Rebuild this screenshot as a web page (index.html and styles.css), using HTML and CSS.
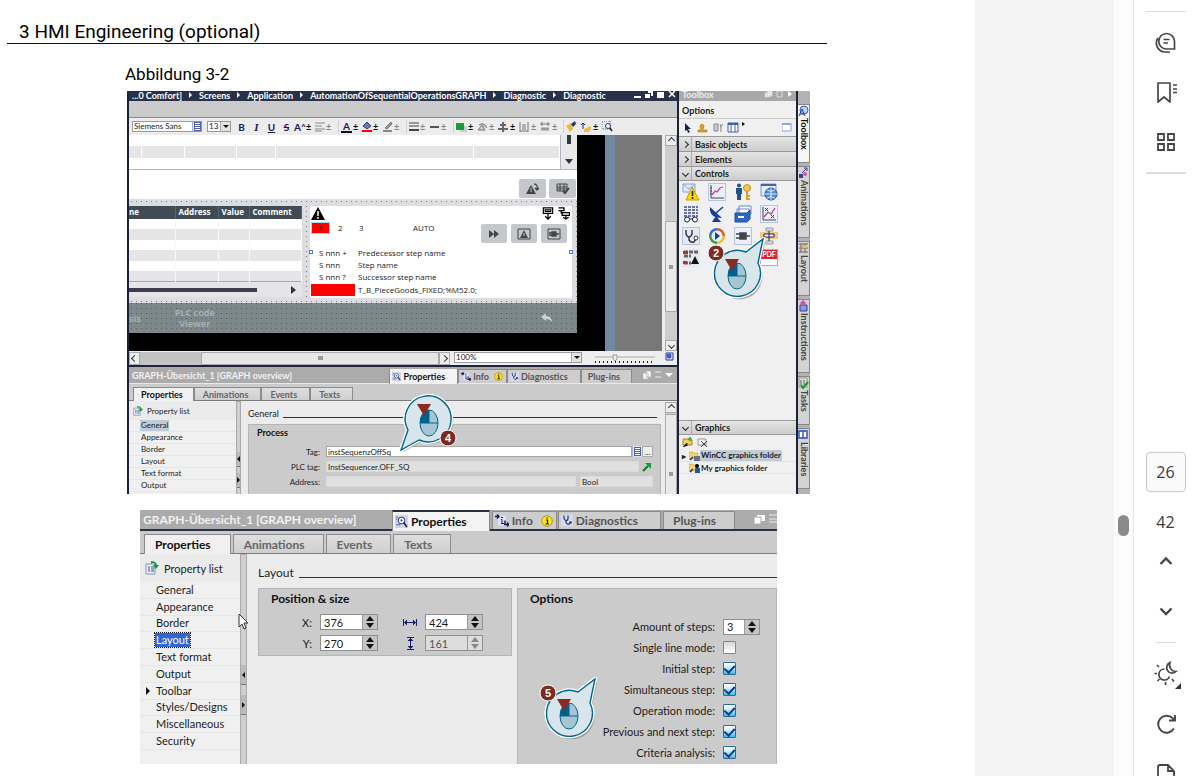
FILE: index.html
```html
<!DOCTYPE html>
<html lang="en">
<head>
<meta charset="utf-8">
<title>HMI Engineering</title>
<link rel="stylesheet" href="styles.css">
</head>
<body>
<svg class="sprite" aria-hidden="true">
  <symbol id="mouse" viewBox="0 0 20 28">
    <ellipse cx="10" cy="14" rx="9" ry="13" fill="#a5c5d3" stroke="#00668d" stroke-width="1"/>
    <path d="M10 1A9 13 0 0 0 1 14H10Z" fill="#005f8b"/>
    <path d="M10 1V14M1 14H19" stroke="#00668d" fill="none"/>
  </symbol>
  <symbol id="bubble-up" viewBox="0 0 68 68">
    <path d="M43 15L60 2L55 26A23 23 0 1 1 43 15Z" transform="translate(2 3)" fill="#777" opacity=".6"/>
    <path d="M43 15L60 2L55 26A23 23 0 1 1 43 15Z" fill="#d8e6ec" stroke="#fff" stroke-width="4"/>
    <path d="M43 15L60 2L55 26A23 23 0 1 1 43 15Z" fill="#d8e6ec" stroke="#00668d" stroke-width="1.4"/>
    <use href="#mouse" x="24" y="25" width="20" height="28"/>
    <path d="M22 22H36L29 34Z" fill="#8b2a20"/>
    <circle cx="13" cy="16" r="8" fill="#7d2a22" stroke="#fff" stroke-width="1"/>
  </symbol>
  <symbol id="bubble-down" viewBox="0 0 68 68">
    <path d="M24 56L6 66L13 46A23 23 0 1 1 24 56Z" transform="translate(2 2)" fill="#777" opacity=".6"/>
    <path d="M24 56L6 66L13 46A23 23 0 1 1 24 56Z" fill="#d8e6ec" stroke="#fff" stroke-width="4"/>
    <path d="M24 56L6 66L13 46A23 23 0 1 1 24 56Z" fill="#d8e6ec" stroke="#00668d" stroke-width="1.4"/>
    <use href="#mouse" x="24" y="25" width="20" height="28"/>
    <path d="M22 20H36L29 32Z" fill="#8b2a20"/>
    <circle cx="53" cy="54" r="8" fill="#7d2a22" stroke="#fff" stroke-width="1"/>
  </symbol>
  <symbol id="i-look" viewBox="0 0 12 12"><rect width="12" height="12" fill="#cdd6ee"/><circle cx="6" cy="5" r="3" fill="#fff" stroke="#3a4a8a"/><circle cx="6" cy="5" r="1" fill="#3a4a8a"/><path d="M8 7L11 11" stroke="#223" stroke-width="1.5"/><path d="M1 2H3M1 4H2M1 9H5" stroke="#5568a8"/></symbol>
  <symbol id="i-infodoc" viewBox="0 0 14 12"><rect x="3" y="1" width="8" height="10" fill="#dde2f4"/><path d="M0 2H4M2 0L4 2L2 4M9 10H14M12 8L14 10L12 12M10 6V10" stroke="#1b1d6b" stroke-width="1.5" fill="none"/><path d="M6 5H7V9M6 9H9M6 3H8" stroke="#1b1d6b" fill="none"/></symbol>
  <symbol id="i-warninfo" viewBox="0 0 12 12"><circle cx="6" cy="6" r="5.3" fill="#ffe21a" stroke="#b09a20"/><path d="M5 5H6.500V9M4.500 9H8M5.500 3H7" stroke="#222" stroke-width="1.2" fill="none"/></symbol>
  <symbol id="i-steth" viewBox="0 0 12 12"><rect width="12" height="12" fill="#d3dbef"/><path d="M3 1V4Q4 6 5 6Q7 6 7 4V1M5 6V8Q6 10 8 10L9 8" stroke="#2b3470" fill="none" stroke-width="1.2"/><circle cx="9.500" cy="8" r="1.300" fill="#2b3470"/></symbol>
  <symbol id="i-proplist" viewBox="0 0 14 14"><path d="M1 3H10V13H1Z" fill="#eef1fa" stroke="#8090c0"/><path d="M3 6H5M6 6H9M3 8H5M6 8H9M3 10H5M6 10H9" stroke="#3a4a8a"/><path d="M6 3Q9 0 10 4H8L11 8L14 4H12Q11 0 6 0Z" fill="#189a30"/></symbol>
  <symbol id="i-tri-warn" viewBox="0 0 14 14"><path d="M7 0L14 13H0Z"/><path d="M7 4V9M7 10V12" stroke="#fff" stroke-width="1.500"/></symbol>
  <symbol id="i-wins" viewBox="0 0 12 10"><path d="M3 1H11V7H3Z" fill="#fff"/><path d="M0 3H7V10H0Z" fill="#fff" stroke="#aaa"/></symbol>
  <symbol id="i-step" viewBox="0 0 12 14"><path d="M1 1H11V7H1ZM3 3H9V5H3ZM6 7V12M3 10L6 13L9 10" stroke="#000" stroke-width="1.300" fill="none"/></symbol>
  <symbol id="i-flow" viewBox="0 0 12 14"><path d="M0 1H6V4H0M3 4V7M4 6H12V9H4ZM8 9V12M5 11L8 13L11 11" stroke="#000" stroke-width="1.400" fill="none"/></symbol>
</svg>

<main class="doc">
  <h1 class="doc-head">3 HMI Engineering (optional)</h1>
  <p class="caption">Abbildung 3-2</p>

  <section class="shot editor" aria-label="Screen editor">
    <div class="main">
      <nav class="crumbs">
        <span>...0 Comfort]</span><i></i><span>Screens</span><i></i><span>Application</span><i></i><span>AutomationOfSequentialOperationsGRAPH</span><i></i><span>Diagnostic</span><i></i><span>Diagnostic</span>
        <svg class="win" width="44" height="8"><path d="M1 5H8V7H1ZM15 0H20V5H18V2H15ZM12 3H17V7H12ZM24 1H31V7H24Z" fill="#fff"/><path d="M36 0L42 6M42 0L36 6" stroke="#fff" stroke-width="1.500"/></svg>
      </nav>
      <div class="band"></div>
      <div class="toolbar">
        <label class="pick"><select class="face" aria-label="Font"><option>Siemens Sans</option></select><b class="lst"></b></label>
        <label class="pick size"><select aria-label="Size"><option>13</option></select><b class="dd"></b></label>
        <button class="tx">B</button><button class="tx it">I</button><button class="tx un">U</button><button class="tx st">S</button>
        <button class="tool"><strong>A˄</strong><em>±</em></button>
        <button class="tool dim"><svg width="10" height="10"><path d="M0 1H10M0 4H7M0 7H10M0 9H7" stroke="#888"/></svg><em>±</em></button>
        <hr>
        <button class="tool"><strong class="bar">A</strong><em>±</em></button>
        <button class="tool"><svg width="10" height="11"><path d="M1 5L5 1L9 5L5 8Z" fill="#6b79b0" stroke="#34427e"/><path d="M0 10H10" stroke="red" stroke-width="2"/></svg><em>±</em></button>
        <button class="tool dim"><svg width="10" height="11"><path d="M2 7L8 1L9 3L4 8Z" fill="#999" stroke="#777"/><path d="M0 10H9" stroke="#888" stroke-width="2"/></svg><em>±</em></button>
        <hr>
        <button class="tool dim"><svg width="10" height="10"><path d="M0 1H10M0 4H10" stroke="#444"/><path d="M0 8H10" stroke="#444" stroke-width="2"/></svg><em>±</em></button>
        <button class="tool dim"><svg width="10" height="10"><path d="M0 5H9" stroke="#555" stroke-width="2"/></svg><em>±</em></button>
        <hr>
        <button class="tool"><svg width="11" height="10"><path d="M4 4H11V10H4Z" fill="#ccc"/><path d="M0 1H8V8H0Z" fill="#16a035"/></svg><em>±</em></button>
        <button class="tool dim"><svg width="11" height="10"><path d="M1 8H8L5 3ZM2 3Q5 0 8 3L10 6" stroke="#777" fill="#ccc"/></svg><em>±</em></button>
        <button class="tool"><svg width="11" height="10"><path d="M5 0V10M2 3H8M0 7H10" stroke="#666" stroke-width="2"/></svg><em>±</em></button>
        <button class="tool dim"><svg width="11" height="10"><path d="M1 0V10M9 0V10M4 2V8M6 2V8M1 9H9" stroke="#777" fill="none"/></svg><em>±</em></button>
        <button class="tool dim"><svg width="11" height="10"><path d="M0 2H10M2 0V4M8 0V4" stroke="#777" fill="none"/><path d="M1 7H9" stroke="#999" stroke-width="3"/></svg><em>±</em></button>
        <hr>
        <button class="tool tight"><svg width="11" height="11"><path d="M0 5L5 2L7 8L4 11Z" fill="#f1b93c"/><path d="M5 3L9 0L10 3L7 6Z" fill="#26357c"/></svg></button>
        <button class="tool"><svg width="11" height="10"><path d="M2 7V1M0 3L2 1L4 3" stroke="#1b2d88" fill="none"/><path d="M3 7L10 4V7L8 10H3Z" fill="#f0b94a"/></svg><em>±</em></button>
        <button class="tool"><svg width="11" height="11"><path d="M0 0H8V8H0Z" fill="#eee" stroke="#4a5691" stroke-dasharray="1 1"/><circle cx="6" cy="5" r="2.500" fill="#fff" stroke="#26357c"/><path d="M8 7L10 10" stroke="#222" stroke-width="1.500"/></svg></button>
      </div>

      <div class="canvas">
        <div class="screen">
          <div class="upper">
            <table class="strip"><tr><td><td><td><td><td><td></tr><tr><td><td><td><td><td><td></tr><tr><td><td><td><td><td><td></tr></table>
            <div class="upscroll"><i></i><b></b></div>
          </div>
          <div class="acts">
            <button class="hmi"><svg width="14" height="12"><path d="M5 2L10 11H0Z" fill="#444"/><path d="M5 5V9" stroke="#ccc"/><path d="M8 1Q12 1 11 6M9 5L11 7L13 5" stroke="#444" fill="none" stroke-width="1.300"/></svg></button>
            <button class="hmi"><svg width="14" height="12"><path d="M1 1H11V8H1ZM1 4H11M4 1V8M8 1V8M1 6H11" stroke="#444" fill="none"/><path d="M7 8L9 10L13 5" stroke="#444" stroke-width="2" fill="none"/></svg></button>
          </div>
          <div class="grid-area">
            <div class="alarms">
              <table class="tags">
                <tr><th>ne</th><th>Address</th><th>Value</th><th>Comment</th></tr>
                <tr><td><td><td><td></tr><tr><td><td><td><td></tr><tr><td><td><td><td></tr><tr><td><td><td><td></tr><tr><td><td><td><td></tr><tr><td><td><td><td></tr>
              </table>
              <div class="hbar"><i></i><b></b></div>
            </div>
            <div class="graph">
              <div class="g-top"><svg width="14" height="14"><use href="#i-tri-warn"/></svg><span></span><svg width="12" height="13"><use href="#i-step"/></svg><svg width="12" height="13"><use href="#i-flow"/></svg></div>
              <div class="g-mode"><mark>1</mark><span>2</span><span>3</span><span class="auto">AUTO</span>
                <button class="hmi"><svg width="12" height="10"><path d="M1 1L6 5L1 9ZM6 1L11 5L6 9Z" fill="#444"/></svg></button>
                <button class="hmi"><svg width="14" height="12"><path d="M1 1H13V11H1Z" fill="none" stroke="#444"/><path d="M7 2L11 10H3Z" fill="#444"/><path d="M7 5V8" stroke="#ccc"/></svg></button>
                <button class="hmi"><svg width="14" height="12"><path d="M1 1H13V11H1Z" fill="none" stroke="#444"/><path d="M5 4H9V8H5ZM2 5H5M2 7H5M9 6H12" fill="#444" stroke="#444" stroke-width="1.300"/></svg></button>
              </div>
              <dl class="steps">
                <dt>S nnn +</dt><dd>Predecessor step name</dd>
                <dt>S nnn</dt><dd>Step name</dd>
                <dt>S nnn ?</dt><dd>Successor step name</dd>
                <dt class="red"></dt><dd>T_B_PieceGoods_FIXED;%M52.0;</dd>
              </dl>
              <i class="handle l"></i><i class="handle r"></i>
            </div>
          </div>
          <div class="footer"><span>sis</span><span class="plc">PLC code<br>Viewer</span><svg width="12" height="10"><path d="M0 4L5 0V3Q11 3 11 9Q9 6 5 6V8Z" fill="#ccd0d2"/></svg></div>
        </div>
        <div class="blue"></div><div class="gray"></div>
        <div class="vscroll"><button class="up" aria-label="Up"></button><i></i><button class="down" aria-label="Down"></button></div>
      </div>

      <div class="hscroll">
        <button class="arr left" aria-label="Left"></button><i></i><b></b><button class="arr right" aria-label="Right"></button>
        <label class="pick zoomsel"><select aria-label="Zoom"><option>100%</option></select><b class="dd"></b></label>
        <svg width="62" height="11"><path d="M1 4H61" stroke="#aaa"/><path d="M1 9H61" stroke="#222" stroke-width="2" stroke-dasharray="1 3"/><path d="M19 2H23V6L21 8L19 6Z" fill="#eee" stroke="#999"/></svg>
        <svg width="9" height="9"><path d="M1 1H8V8H1Z" fill="#dfe6ff" stroke="#223a9a"/><circle cx="4" cy="4" r="2.500" fill="#3658e0"/></svg>
      </div>

      <div class="insp small">
        <div class="titlebar">
          <span class="ttl">GRAPH-Übersicht_1 [GRAPH overview]</span>
          <button class="tt on"><svg width="9" height="9"><use href="#i-look"/></svg>Properties</button>
          <button class="tt"><svg width="10" height="9"><use href="#i-infodoc"/></svg>Info<svg class="wi" width="9" height="9"><use href="#i-warninfo"/></svg></button>
          <button class="tt"><svg width="9" height="9"><use href="#i-steth"/></svg>Diagnostics</button>
          <button class="tt last">Plug-ins</button>
          <svg class="wctl" width="34" height="9"><path d="M3 0H8V6H3ZM0 2H5V8H0Z" fill="#fff" stroke="#bbb"/><path d="M12 1H18M12 6H18" stroke="#eee"/><path d="M22 2H30L26 6Z" fill="#fff"/></svg>
        </div>
        <div class="subtabs"><button class="on">Properties</button><button>Animations</button><button>Events</button><button>Texts</button></div>
        <div class="ibody">
          <nav class="plist">
            <div class="phead"><svg width="10" height="10"><use href="#i-proplist"/></svg>Property list</div>
            <ul><li><a class="cur" href="#general">General</a></li><li><a href="#appearance">Appearance</a></li><li><a href="#border">Border</a></li><li><a href="#layout">Layout</a></li><li><a href="#text">Text format</a></li><li><a href="#output">Output</a></li><li><a href="#toolbar">Toolbar</a></li></ul>
          </nav>
          <div class="split"><i></i><b></b></div>
          <div class="pane">
            <h2>General</h2>
            <div class="group">
              <h3>Process</h3>
              <div class="field"><label for="tag">Tag:</label><input id="tag" value="instSequenzOffSq"><button class="lst" aria-label="Browse tags"></button><button class="dots">...</button></div>
              <div class="field"><label for="plc">PLC tag:</label><input id="plc" class="ro" readonly value="InstSequencer.OFF_SQ"><svg width="12" height="10"><path d="M2 9L7 4" stroke="#0d7a26" stroke-width="2"/><path d="M4 1H10V7Z" fill="#159c36"/></svg></div>
              <div class="field"><label for="adr">Address:</label><input id="adr" class="ro" readonly><input class="ro type" readonly value="Bool" aria-label="Data type"></div>
            </div>
          </div>
          <div class="vscroll low"><button class="up" aria-label="Up"></button><i></i></div>
        </div>
      </div>
    </div>

    <aside class="toolbox">
      <div class="tb-title"><span>Toolbox</span><svg width="30" height="8"><path d="M3 0H8V5H3ZM1 2H6V6H1Z" fill="#fff" stroke="#ccc"/><path d="M13 0H18V6H13Z" fill="none" stroke="#ddd"/><path d="M24 0L28 3L24 6Z" fill="#fff"/></svg></div>
      <div class="tb-opt">Options</div>
      <div class="tb-tools">
        <svg width="62" height="12"><path d="M2 1L8 7L5 7L7 10L5 11L4 8L2 9Z" fill="#14205e"/><path d="M15 10H24V8H21L20 6A2 2 0 1 0 18 6L17 8H15Z" fill="#d6a52b" stroke="#8d6b15" stroke-width=".500"/><path d="M31 2H35V9H31ZM37 2L38 5V10M40 2L38 5" stroke="#888" fill="#ccc"/><path d="M45 1H55V10H45ZM48 1V10M52 1V10" fill="#fff" stroke="#3d5ea8"/><path d="M45 2H55" stroke="#3d5ea8" stroke-width="2"/><path d="M59 0L62 2L59 4Z"/></svg>
        <svg width="10" height="9"><path d="M0 0H9V8H0Z" fill="#fff" stroke="#8da4dd"/><path d="M0 1H9" stroke="#8da4dd" stroke-width="2"/></svg>
      </div>
      <button class="acc"><i></i>Basic objects</button>
      <button class="acc"><i></i>Elements</button>
      <button class="acc open"><i></i>Controls</button>
      <div class="ctl">
        <svg viewBox="0 0 18 18"><path d="M1 1H13V9H1Z" fill="#dfe9ff" stroke="#86a3e0"/><path d="M1 1L7 6L13 1" stroke="#86a3e0" fill="none"/><path d="M10 4L17 17H4Z" fill="#ffd900" stroke="#c79f00"/><path d="M10.500 8V13M10.500 14V16" stroke="#222" stroke-width="1.500"/></svg>
        <svg viewBox="0 0 18 18"><rect x=".5" y=".5" width="17" height="17" fill="#eaf0fc" stroke="#b4c2e4"/><path d="M3 2V15H16M2 5H4M2 8H4M2 11H4" stroke="#444" fill="none"/><path d="M4 12L7 8L9 9L12 5L15 4" stroke="#d33a8c" fill="none" stroke-width="1.300"/></svg>
        <svg viewBox="0 0 18 18"><circle cx="5" cy="2.500" r="2" fill="#20508e"/><path d="M2 5H8V11H7V17H3V11H2Z" fill="#20508e"/><circle cx="13" cy="5" r="3.500" fill="#f3c54c" stroke="#c28b1c"/><path d="M13 8V17M13 13H16M13 16H16" stroke="#d9a32c" stroke-width="2"/></svg>
        <svg viewBox="0 0 18 18"><path d="M1 1H16V13H1Z" fill="#e6eefc" stroke="#7d97cf"/><path d="M1 2H16" stroke="#3d64b4" stroke-width="2"/><circle cx="11" cy="11" r="6" fill="#4a8bd0" stroke="#1f4f90"/><path d="M5 11H17M11 5V17M7 7Q11 10 15 7M7 15Q11 12 15 15" stroke="#dceaff" fill="none"/></svg>
        <svg viewBox="0 0 18 18"><rect width="18" height="18" fill="#eaf0fc"/><path d="M2 2H16M2 5H16M2 8H16M2 11H16" stroke="#3d4a86" stroke-dasharray="3 1" stroke-width="1.500"/><circle cx="5" cy="14.500" r="2.500" fill="#fff" stroke="#223"/><circle cx="13" cy="14.500" r="2.500" fill="#fff" stroke="#223"/><path d="M7 14H11" stroke="#223"/></svg>
        <svg viewBox="0 0 18 18"><rect width="18" height="18" fill="#eaf0fc"/><path d="M2 2Q1 13 14 13Z" fill="#183a9a"/><path d="M8 8L15 2" stroke="#183a9a" stroke-width="1.500"/><path d="M8 11L13 17H4Z" fill="#183a9a"/></svg>
        <svg viewBox="0 0 18 18"><path d="M5 1H17V9H5ZM3 4H15V10H3Z" fill="#fff" stroke="#5f86cc"/><path d="M1 8H13L16 5V14L13 17H1Z" fill="#2a67c9" stroke="#1e4c9a"/><path d="M4 12H10" stroke="#fff" stroke-width="2"/></svg>
        <svg viewBox="0 0 18 18"><rect x=".5" y=".5" width="17" height="17" fill="#eaf0fc" stroke="#b4c2e4"/><path d="M3 2V15H16M5 3L8 6M8 3L5 6M11 10L14 13M14 10L11 13" stroke="#444" fill="none"/><path d="M4 12L8 7L11 9L15 3" stroke="#c33a8c" fill="none" stroke-width="1.300"/></svg>
        <svg viewBox="0 0 18 18"><rect x=".5" y=".5" width="17" height="17" fill="#e3ebfb" stroke="#b4c2e4"/><path d="M4 3V7Q5 10 7 10Q9 10 10 7V3M7 10V13Q9 16 12 15L14 12" stroke="#333" fill="none" stroke-width="1.400"/><circle cx="14" cy="11" r="2" fill="#fff" stroke="#333"/></svg>
        <svg viewBox="0 0 18 18"><path d="M9 1A8 8 0 0 1 17 9H9Z" fill="#e05a2a"/><path d="M17 9A8 8 0 0 1 9 17V9Z" fill="#f4bf2a"/><path d="M9 17A8 8 0 0 1 1 9H9Z" fill="#3d9b45"/><path d="M1 9A8 8 0 0 1 9 1V9Z" fill="#3d6fd0"/><circle cx="9" cy="9" r="5.500" fill="#e9f2ff"/><path d="M7 5L12 9L7 13Z" fill="#1b3f93"/></svg>
        <svg viewBox="0 0 18 18"><rect x=".5" y=".5" width="17" height="17" fill="#eaf0fc" stroke="#b4c2e4"/><path d="M6 6H12V12H6ZM2 7H6M2 11H6M12 9H16" fill="#444" stroke="#444" stroke-width="1.500"/></svg>
        <svg viewBox="0 0 18 18"><rect width="18" height="18" fill="#eee"/><path d="M0 5H18V12H0Z" fill="#f6c57a"/><path d="M6 1H13V4H6ZM6 14H13V17H6Z" fill="#ddd" stroke="#999"/><path d="M4 7H14V10H4ZM9 4V14" stroke="#1d2770" fill="#fff"/></svg>
        <svg viewBox="0 0 18 18"><rect width="18" height="18" fill="#e4e8ef"/><path d="M2 3H16M2 7H9M2 14H9" stroke="#666" stroke-width="3" stroke-dasharray="4 1"/><path d="M1 2H6V5H1ZM1 12H5V15H1Z" fill="#c42a2a"/><path d="M13 7L17 15H9Z" fill="#111"/></svg>
        <svg viewBox="0 0 18 18"><rect width="18" height="18" fill="#eaf0fc"/></svg>
        <svg viewBox="0 0 18 18"><rect width="18" height="18" fill="#eaf0fc"/></svg>
        <span class="pdf">PDF</span>
      </div>
      <button class="acc open gfx"><i></i>Graphics</button>
      <div class="gtools"><svg width="28" height="12"><path d="M1 3H6L7 4H10V9H1Z" fill="#f1cf62" stroke="#a98420"/><path d="M8 1V5M6 3H10" stroke="#3bab27" stroke-width="1.500"/><path d="M1 11L5 7V10" stroke="#1b2d88"/><path d="M16 3H24V9H16Z" fill="#eee" stroke="#999"/><path d="M19 5L25 11M25 5L19 11" stroke="#444"/></svg></div>
      <ul class="tree">
        <li><i>▸</i><svg width="11" height="11"><path d="M0 2H4L5 3H9V9H0Z" fill="#f3d36d" stroke="#b08e30" stroke-width=".500"/><path d="M5 6H11V11H5Z" fill="#697079"/><path d="M1 10L4 7" stroke="#1b2d88" stroke-width="1.500"/></svg><a class="cur" href="#wincc">WinCC graphics folder</a></li>
        <li><i></i><svg width="11" height="11"><path d="M0 2H4L5 3H9V9H0Z" fill="#f3d36d" stroke="#b08e30" stroke-width=".500"/><circle cx="8" cy="4" r="2"/><path d="M6 6H11V11H6Z" fill="#2357a0"/><path d="M1 10L4 7" stroke="#1b2d88" stroke-width="1.500"/></svg><a href="#my">My graphics folder</a></li>
      </ul>
    </aside>

    <nav class="vtabs">
      <button class="on"><svg width="11" height="12"><circle cx="6" cy="5" r="4" fill="#bfd0fa" stroke="#3a5bc4"/><path d="M1 11L4 4L7 11M2 9H6" stroke="#223a9a" fill="none"/></svg>Toolbox</button>
      <button><svg width="11" height="12"><path d="M1 7H5V11H1Z" fill="#3b3f9c"/><path d="M4 6L9 1M6 1H9V4" stroke="#3b3f9c" fill="none"/><circle cx="7" cy="7" r="2" fill="#d05aa8"/></svg>Animations</button>
      <button><svg width="11" height="12"><path d="M1 2H10M1 6H10M1 10H10M3 1V11M7 1V11" stroke="#888" stroke-width="1.500"/><path d="M4 3H9V6H4Z" fill="#f0b94a"/></svg>Layout</button>
      <button><svg width="11" height="12"><path d="M2 5H9V11H2Z" fill="#8c98dc" stroke="#3b3f9c"/><path d="M5 0L8 3L5 6L2 3Z" fill="#d64bb0"/></svg>Instructions</button>
      <button><svg width="11" height="12"><rect x="1" y="1" width="8" height="9" fill="#e9dfae" stroke="#999"/><path d="M3 3V8M6 3V8" stroke="#3b5fc4"/><path d="M3 8L5 11L10 5" stroke="#189a30" stroke-width="2" fill="none"/></svg>Tasks</button>
      <button><svg width="11" height="12"><path d="M1 2H5V9H1ZM5 2H9V9H5Z" fill="#fff" stroke="#2c4bc0" stroke-width="1.400"/></svg>Libraries</button>
    </nav>
    <div class="callout c4"><svg width="68" height="68"><use href="#bubble-down"/></svg><span>4</span></div>
    <div class="callout c2"><svg width="68" height="68"><use href="#bubble-up"/></svg><span>2</span></div>
  </section>

  <section class="shot insp big" aria-label="Inspector window">
    <div class="titlebar">
      <span class="ttl">GRAPH-Übersicht_1 [GRAPH overview]</span>
      <button class="tt on"><svg width="13" height="13"><use href="#i-look"/></svg>Properties</button>
      <button class="tt"><svg width="14" height="13"><use href="#i-infodoc"/></svg>Info<svg class="wi" width="12" height="12"><use href="#i-warninfo"/></svg></button>
      <button class="tt"><svg width="12" height="13"><use href="#i-steth"/></svg>Diagnostics</button>
      <button class="tt last">Plug-ins</button>
      <svg width="12" height="10"><use href="#i-wins"/></svg><svg width="8" height="10" viewBox="0 0 8 10"><path d="M0 1H8M0 5H8M0 8H8" stroke="#eee" stroke-width="1"/></svg>
    </div>
    <div class="subtabs"><button class="on">Properties</button><button>Animations</button><button>Events</button><button>Texts</button></div>
    <div class="ibody">
      <nav class="plist">
        <div class="phead"><svg width="14" height="14"><use href="#i-proplist"/></svg>Property list</div>
        <ul><li><a href="#general">General</a></li><li><a href="#appearance">Appearance</a></li><li><a href="#border">Border</a></li><li><a class="cur" href="#layout">Layout</a></li><li><a href="#text">Text format</a></li><li><a href="#output">Output</a></li><li class="sub"><a href="#toolbar">Toolbar</a></li><li><a href="#styles">Styles/Designs</a></li><li><a href="#misc">Miscellaneous</a></li><li><a href="#security">Security</a></li></ul>
      </nav>
      <div class="split"><i></i><b></b></div>
      <div class="pane">
        <h2>Layout</h2>
        <div class="groups">
          <div class="group pos">
            <h3>Position &amp; size</h3>
            <div class="xy">
              <label for="x">X:</label><span class="spin"><input id="x" value="376"><button aria-label="Step X"></button></span>
              <label for="w"><svg width="14" height="7" aria-label="Width" shape-rendering="crispEdges"><path d="M0 0H1V7H0ZM13 0H14V7H13ZM1 3H13V4H1ZM3 1H4V6H3ZM2 2H3V5H2ZM10 1H11V6H10ZM11 2H12V5H11Z" fill="#16206e"/></svg></label><span class="spin"><input id="w" value="424"><button aria-label="Step width"></button></span>
              <label for="y">Y:</label><span class="spin"><input id="y" value="270"><button aria-label="Step Y"></button></span>
              <label for="h"><svg width="14" height="13" aria-label="Height" shape-rendering="crispEdges"><path d="M4 0H11V1H4ZM4 12H11V13H4ZM7 1H8V12H7ZM6 2H9V3H6ZM5 3H10V4H5ZM5 9H10V10H5ZM6 10H9V11H6Z" fill="#16206e"/></svg></label><span class="spin off"><input id="h" value="161" disabled><button disabled aria-label="Step height"></button></span>
            </div>
          </div>
          <div class="group opts">
            <h3>Options</h3>
            <div class="rows">
              <label for="n">Amount of steps:</label><span class="spin"><input id="n" value="3"><button aria-label="Step amount"></button></span>
              <label for="o1">Single line mode:</label><input type="checkbox" id="o1">
              <label for="o2">Initial step:</label><input type="checkbox" id="o2" checked>
              <label for="o3">Simultaneous step:</label><input type="checkbox" id="o3" checked>
              <label for="o4">Operation mode:</label><input type="checkbox" id="o4" checked>
              <label for="o5">Previous and next step:</label><input type="checkbox" id="o5" checked>
              <label for="o6">Criteria analysis:</label><input type="checkbox" id="o6" checked>
            </div>
          </div>
        </div>
      </div>
    </div>
    <svg class="cursor" width="12" height="18"><path d="M1 1V14L4 11L6 16L8 15L6 10H10Z" fill="#fff" stroke="#333"/></svg>
    <div class="callout c5"><svg width="68" height="68"><use href="#bubble-up"/></svg><span>5</span></div>
  </section>
</main>
<div class="gutter"></div>
<div class="track"><i></i></div>
<aside class="rail">
  <hr>
  <button aria-label="Comments"><svg width="24" height="24" fill="none" stroke="#464646" stroke-width="1.700"><path d="M12.500 3.500A8 8 0 0 1 20.500 11.500V19H12.500A7.500 7.500 0 0 1 12.500 3.500Z"/><path d="M4 8A9 9 0 0 0 10 22H16M9.500 9.500H15.500M9.500 13H14"/></svg></button>
  <button aria-label="Bookmarks"><svg width="24" height="24" fill="none" stroke="#464646" stroke-width="1.700"><path d="M4 3H16V22L10 17L4 22Z" stroke-linejoin="round"/><path d="M19 5H23M19 9H23M19 12.500H23"/></svg></button>
  <button aria-label="Page thumbnails"><svg width="24" height="24" fill="none" stroke="#464646" stroke-width="1.800"><path d="M4 4H10V10H4ZM14 4H20V10H14ZM4 14H10V20H4ZM14 14H20V20H14Z"/></svg></button>
  <hr class="thick">
  <input class="page" value="26" aria-label="Page">
  <span class="total">42</span>
  <button aria-label="Previous page"><svg width="24" height="24" fill="none" stroke="#464646" stroke-width="2.400"><path d="M6.500 15L12 9.500L17.500 15"/></svg></button>
  <button aria-label="Next page"><svg width="24" height="24" fill="none" stroke="#464646" stroke-width="2.400"><path d="M6.500 9.500L12 15L17.500 9.500"/></svg></button>
  <hr class="narrow">
  <button class="theme" aria-label="Display theme"><svg width="32" height="30" fill="none" stroke="#464646" stroke-width="1.700"><path d="M14.500 10A5.500 5.500 0 1 0 19.500 17.500"/><path d="M20 3.500A5.500 5.500 0 1 0 26 12.500A6.500 6.500 0 0 1 20 3.500Z"/><path d="M4.500 14.500H7M7 6L9 8M7.500 22L9.500 20M15.500 23V26M22 20L24 22.500"/><path d="M31 24V30H25Z" fill="#333" stroke="none"/></svg></button>
  <button aria-label="Rotate"><svg width="24" height="24" fill="none" stroke="#464646" stroke-width="1.900"><path d="M20 16.500A8.500 8.500 0 1 1 18.500 6L20 8M21 3V8.500H15"/></svg></button>
  <button class="cut" aria-label="Export page"><svg width="24" height="24" fill="none" stroke="#464646" stroke-width="1.800"><path d="M4 22V5Q4 3 6 3H14L20 9V22M14 3V9H20M9 15H15V21"/></svg></button>
</aside>
</body>
</html>
```

FILE: styles.css
```css
* { box-sizing: border-box; }
body { margin: 0; display: flex; height: 100vh; overflow: hidden; background: #fff; color: #1c1c1c; font-family: Lato, "Open Sans", sans-serif; }
button, input, select { font: inherit; color: inherit; border: 0; padding: 0; margin: 0; background: none; border-radius: 0; min-width: 0; }
button { display: flex; align-items: center; }
svg { flex: none; display: block; }
i, em { font-style: normal; }
a { color: inherit; text-decoration: none; }
ul { list-style: none; margin: 0; padding: 0; }
hr { border: 0; margin: 0; flex: none; }
table { border-collapse: collapse; }
.sprite { position: absolute; width: 0; height: 0; }

/* document page */
.doc { flex: 1; min-width: 0; }
.doc-head { margin: 0 148px 0 7px; padding: 20px 12px 0; height: 44px; border-bottom: 1px solid #111; font: 19px/24px Roboto, "Liberation Sans", sans-serif; color: #000; }
.caption { margin: 20px 0 7px 125px; font: 17px/20px Roboto, "Liberation Sans", sans-serif; color: #000; }
.shot { position: relative; overflow: hidden; }
.gutter { width: 139px; background: #f4f4f4; }
.track { width: 20px; background: #fcfcfc; border-right: 1px solid #e4e4e4; padding: 515px 0 0 4px; }
.track i { display: block; width: 11px; height: 21px; border-radius: 6px; background: #8b8b8b; }

/* editor window */
.editor { height: 403px; margin: 0 165px 16px 127px; display: flex; font-size: 8px; background: #efefef; }
.main { flex: 1; min-width: 0; display: flex; flex-direction: column; border-left: 2px solid #1c2338; border-right: 2px solid #1c2338; }
.crumbs { height: 10px; flex: none; background: #29304a; color: #fff; font: bold 9px/9px Lato, sans-serif; display: flex; padding-left: 3px; white-space: nowrap; }
.crumbs i { margin: 1px 7px; border: 3px solid transparent; border-left-color: #fff; border-right: 0; height: 6px; }
.win { margin-left: auto; }
.band { height: 17px; flex: none; background: #cbcbcb; border-bottom: 1px solid #8d8d8d; }
.toolbar { height: 17px; flex: none; background: #ececec; display: flex; align-items: center; padding-left: 3px; }
.pick { display: flex; height: 11px; width: 70px; border: 1px solid #9a9a9a; background: #fff; margin-right: 5px; font-size: 8px; }
.pick select { appearance: none; flex: 1; line-height: 9px; padding-left: 1px; outline: 0; }
.pick.size { width: 24px; margin-right: 3px; }
.dd { width: 10px; background: #e2e2e2; border-left: 1px solid #aaa; display: flex; align-items: center; justify-content: center; }
.dd::after { content: ""; border: 3px solid transparent; border-top-color: #111; border-bottom: 0; }
.lst { width: 9px; justify-content: center; display: flex; align-items: center; background: #dce3f6; border-left: 1px solid #aab3cc; }
.lst::after { content: ""; width: 5px; height: 7px; background: repeating-linear-gradient(#fff 0 1px, #5262a8 1px 2px); border: 1px solid #5262a8; }
.tx { width: 15px; justify-content: center; font: bold 10px/12px Lato, sans-serif; color: #171a58; }
.it { font-style: italic; font-family: "Liberation Serif", serif; font-size: 11px; }
.un { text-decoration: underline; }
.st { text-decoration: line-through; }
.tool { width: 21px; height: 13px; font-size: 10px; color: #171a58; }
.tool em { color: #111; font-weight: bold; font-size: 9px; margin-left: 1px; }
.tool.dim em { color: #888; }
.tool strong { width: 11px; line-height: 10px; white-space: nowrap; }
.tool .bar { border-bottom: 2px solid #111; text-align: center; }
.tool.tight { width: 15px; }
.toolbar hr { width: 1px; height: 13px; margin: 0 2px; background: #d2d2d2; }

/* drawing canvas */
.canvas { height: 216px; flex: none; display: flex; background: #000; }
.screen { flex: 1; min-width: 0; height: 198px; background: #fff; font-family: "Open Sans", sans-serif; }
.blue { width: 10px; margin-left: 28px; background: #7088a0; }
.gray { width: 47px; background: #787878; }
.upper { display: flex; height: 35px; border-bottom: 1px solid #b4b4c0; background: #fff; }
.strip { flex: 1; height: 34px; display: table; table-layout: fixed; }
.strip td { padding: 0; height: 11px; border-right: 1px solid #fff; }
.strip td:nth-child(1) { width: 3%; }
.strip td:nth-child(2) { width: 10%; }
.strip td:nth-child(3) { width: 12%; }
.strip td:nth-child(4) { width: 9%; }
.strip td:nth-child(5) { width: 46%; }
.strip tr:nth-child(2) td { background: #e5e5e7; }
.upscroll { width: 17px; background: #e8e8eb; border-left: 1px solid #b4b4c0; display: flex; flex-direction: column; align-items: center; gap: 15px; }
.upscroll i { width: 4px; height: 9px; background: #35353c; }
.upscroll b { border: 4px solid transparent; border-top: 5px solid #35353c; border-bottom: 0; }
.acts { display: flex; justify-content: flex-end; gap: 3px; padding: 9px 1px 0; height: 29px; }
.hmi { width: 27px; height: 19px; background: #c4c7cb; border-radius: 2px; justify-content: center; }
.grid-area { height: 104px; display: flex; gap: 8px; padding: 7px 5px 5px 0; background: #dcdce1 conic-gradient(at 1px 1px, transparent 75%, #7d7d86 0) 2px 2px / 5px 5px; }
.alarms { flex: 0 0 173px; }
.tags { width: 100%; height: 76px; table-layout: fixed; background: #fff; border-bottom: 1px solid #a9a9b4; }
.tags th { background: #3f4c56; color: #fff; font-size: 8px; line-height: 10px; height: 12px; text-align: left; padding: 0 0 0 3px; border-right: 1px solid #59666f; }
.tags th:nth-child(1) { width: 46px; padding: 0; }
.tags th:nth-child(2) { width: 43px; }
.tags th:nth-child(3) { width: 31px; }
.tags td { padding: 0; height: 10px; border-right: 1px solid #f8f8f8; }
.tags tr:nth-child(odd) td { background: #e5e5e7; }
.hbar { height: 15px; background: #e5e5e9; display: flex; align-items: center; justify-content: space-between; padding-right: 6px; }
.hbar i { width: 128px; height: 4px; background: #3e3c4c; }
.hbar b { border: 4px solid transparent; border-left: 5px solid #333; border-right: 0; }
.graph { position: relative; flex: 1; min-width: 0; background: #fff; color: #222; padding: 1px; line-height: 12px; }
.g-top { display: flex; gap: 4px; height: 15px; padding-right: 1px; }
.g-top span { flex: 1; }
.g-mode { display: flex; height: 25px; }
.g-mode mark { width: 19px; height: 12px; background: red; border: 1px solid #9bdcf0; text-align: center; line-height: 10px; color: #222; }
.g-mode span { width: 21px; padding-left: 8px; line-height: 11px; }
.g-mode .auto { flex: 1; padding-left: 41px; }
.g-mode .hmi { margin: 2px 4px 0 0; width: 26px; }
.steps { margin: 0; display: grid; grid-template-columns: 44px 1fr; column-gap: 3px; grid-template-rows: 12px 12px 13px 12px; }
.steps dt { padding-left: 8px; }
.steps dd { margin: 0; }
.steps .red { background: red; }
.handle { position: absolute; top: 44px; width: 4px; height: 4px; background: #fff; border: 1px solid #3d7fe0; }
.handle.l { left: -1px; }
.handle.r { right: -1px; }
.footer { height: 30px; display: flex; align-items: center; color: #a5b0b8; font: bold 9px/11px "Open Sans", sans-serif; padding-right: 24px; background: #7d888a conic-gradient(at 1px 1px, transparent 75%, #525b5e 0) 2px 0 / 5px 5px; }
.plc { margin: 0 auto 0 34px; text-align: center; }
.vscroll { width: 15px; border-left: 3px solid #ececec; background: #cdcdcd; display: flex; flex-direction: column; }
.vscroll button { height: 11px; justify-content: center; background: #eee; border: 1px solid #aaa; }
.up::before, .down::before, .left::before, .right::before { content: ""; width: 4px; height: 4px; border: solid #333; border-width: 1px 1px 0 0; }
.up::before { transform: rotate(-45deg); }
.down::before { transform: rotate(135deg); }
.left::before { transform: rotate(-135deg); }
.right::before { transform: rotate(45deg); }
.vscroll i { flex: 1; margin: 75px 0 0; background: #e9e9e9 linear-gradient(#999, #999) center / 4px 4px no-repeat; border: 1px solid #aaa; }
.canvas .vscroll i { margin-bottom: 28px; }
.hscroll { height: 14px; flex: none; display: flex; align-items: center; background: #eee; }
.hscroll > i { width: 61px; height: 13px; background: #c2c2c2; }
.hscroll > b { flex: 1; height: 13px; background: #e6e6e6 linear-gradient(#999, #999) center / 5px 4px no-repeat; border: 1px solid #aaa; }
.arr { width: 11px; height: 13px; justify-content: center; border: 1px solid #aaa; }
.zoomsel { width: 128px; margin: 0 12px 2px 4px; }
.hscroll svg + svg { margin: 0 3px 3px 9px; }

/* inspector, shared by both windows */
.insp { background: #ececec; }
.titlebar { display: flex; align-items: flex-end; background: #ababab; border-bottom: 2px solid #29304a; color: #fff; white-space: nowrap; }
.ttl { font-weight: bold; flex: none; align-self: center; color: #f2f2f2; }
.tt { background: #cdcdcd; border: 1px solid #8b8b8b; border-bottom: 0; color: #555; font-weight: bold; }
.tt.on { background: #f3f3f3; color: #111; border-top: 2px solid #29304a; margin-bottom: -2px; }
.subtabs { display: flex; align-items: flex-end; background: #cbcbcb; border-bottom: 1px solid #7d7d7d; }
.subtabs button { font-weight: bold; color: #666; border: 1px solid #8b8b8b; border-bottom: 0; background: linear-gradient(#dedede, #cfcfcf); }
.subtabs .on { color: #111; background: #f0f0f0; margin-bottom: -1px; }
.ibody { display: flex; }
.plist { flex: none; background: #f0f0f0; }
.phead { display: flex; align-items: center; background: #ebebeb; }
.split { flex: none; background: #cfcfcf; border: 1px solid #aaa; border-bottom: 0; }
.split i, .split b { display: flex; align-items: center; justify-content: center; background: #bbb; border-bottom: 1px solid #777; }
.split i::after, .split b::after { content: ""; border: 3px solid transparent; border-right-color: #111; border-left: 0; }
.split b::after { border-left: 3px solid #111; border-right: 0; }
.pane { flex: 1; min-width: 0; }
.pane h2 { margin: 0; display: flex; font-weight: normal; }
.pane h2::after { content: ""; flex: 1; border-bottom: 1px solid #333; }
.pane h3 { margin: 0; color: #111; }
.group { background: #cbcbcb; border: 1px solid #b5b5b5; }

/* inspector docked in the editor */
.small { border-top: 2px solid #1c2338; flex: 1; display: flex; flex-direction: column; min-height: 0; }
.small .titlebar { height: 17px; flex: none; font-size: 9px; border-bottom: 1px solid #e8e8e8; }
.small .ttl { flex: 1; padding-left: 3px; }
.small .tt { height: 14px; padding: 0 12px 0 2px; gap: 2px; }
.small .tt.on { border-top: 0; height: 15px; margin-bottom: -1px; }
.small .tt:nth-child(3) { padding-right: 3px; }
.small .wi { margin-left: 3px; }
.small .tt.last { padding: 0 11px 0 6px; margin-right: 11px; }
.wctl { align-self: center; }
.small .subtabs { height: 17px; flex: none; padding-left: 4px; font-size: 9px; }
.small .subtabs button { height: 13px; padding: 0 12px 0 8px; }
.small .subtabs .on { height: 14px; padding: 0 10px 0 7px; }
.small .ibody { flex: 1; min-height: 0; }
.small .plist { width: 107px; overflow: hidden; }
.small .phead { height: 19px; padding-left: 4px; gap: 4px; }
.small li { height: 12px; line-height: 11px; padding-left: 11px; border-bottom: 1px solid #e6e6e6; }
.small li a { padding: 0 1px; display: inline-block; }
.small .cur { background: #c0cbd8; }
.small .split { width: 5px; padding-top: 50px; }
.small .split i, .small .split b { height: 15px; margin-bottom: 6px; }
.small .pane { padding: 7px 4px 0 7px; }
.small h2 { font-size: 9px; line-height: 12px; gap: 4px; margin-right: 4px; }
.small h2::after { margin-bottom: 2px; }
.small .group { margin-top: 4px; padding: 2px 7px 8px 8px; height: 100px; }
.small h3 { font-size: 9px; line-height: 12px; margin-bottom: 7px; }
.field { display: flex; align-items: center; height: 11px; margin-bottom: 4px; }
.field label { width: 63px; text-align: right; margin-right: 6px; }
.field input { flex: 1; height: 11px; background: #fff; border: 1px solid #a5a5a5; padding: 0 1px; font-size: 8px; }
.field .ro { background: #e0e0e0; border-color: #dadada; }
.field .type { flex: 0 0 73px; margin-left: 4px; }
.field .lst { height: 11px; width: 10px; }
.dots { height: 11px; width: 11px; justify-content: center; background: #eee; border: 1px solid #aaa; }
.field svg { margin-left: 2px; }
.low { width: 12px; border-left: 0; margin-top: 1px; }
.low i { margin: 1px 0 -40px; }

/* toolbox */
.toolbox { width: 117px; background: #f0f0f0; display: flex; flex-direction: column; font-weight: bold; font-size: 9px; }
.tb-title { height: 10px; background: #a8a8a8; color: #eee; display: flex; justify-content: space-between; line-height: 8px; padding: 0 2px 0 3px; }
.tb-opt { height: 18px; line-height: 20px; padding-left: 3px; border-bottom: 1px solid #ccc; font-size: 9px; }
.tb-tools { height: 17px; display: flex; align-items: center; justify-content: space-between; padding: 0 4px; }
.acc { height: 15px; flex: none; font-weight: bold; background: linear-gradient(#e4e4e4, #cdcdcd); border-top: 1px solid #999; width: 100%; }
.acc i { width: 13px; height: 14px; margin-right: 3px; border-right: 1px solid #aaa; display: flex; align-items: center; justify-content: center; }
.acc i::before { content: ""; width: 4px; height: 4px; border: solid #222; border-width: 1px 1px 0 0; transform: rotate(45deg); }
.acc.open i::before { transform: rotate(135deg); }
.acc.open { border-bottom: 1px solid #999; }
.ctl { display: grid; grid-template-columns: repeat(4, 18px); gap: 4px 8px; padding: 2px 3px; }
.ctl svg { width: 18px; height: 18px; }
.pdf { height: 17px; border: 1px solid #aac; background: linear-gradient(#d8242b 9px, #fff 9px); color: #fff; font-size: 7px; line-height: 9px; text-align: center; }
.acc.gfx { margin-top: auto; }
.gtools { height: 14px; padding: 1px 3px; }
.tree { height: 45px; flex: none; padding-top: 1px; }
.tree li { display: flex; align-items: center; height: 12px; white-space: nowrap; border-bottom: 1px solid #e3e3e3; font-size: 8px; }
.tree i { width: 10px; text-align: center; flex: none; }
.tree .cur { background: #c0cbd8; line-height: 11px; }
.tree a { padding: 0 1px; }
.vtabs { width: 14px; border-left: 2px solid #1c2338; background: #b3b3b3; padding-top: 13px; display: flex; flex-direction: column; gap: 3px; }
.vtabs button { writing-mode: vertical-rl; width: 12px; padding-bottom: 12px; gap: 1px; justify-content: flex-start; background: #d3d3d3; border: 1px solid #888; border-left: 0; color: #444; font: bold 9px/10px Lato, sans-serif; }
.vtabs .on { background: #f6f6f6; color: #111; }

/* large inspector */
.big { height: 254px; margin: 0 198px 0 140px; font-size: 11px; display: flex; flex-direction: column; }
.big .titlebar { height: 21px; flex: none; font-size: 12px; padding-left: 3px; }
.big .ttl { width: 249px; }
.big .tt { height: 18px; padding: 0 22px 0 2px; gap: 3px; margin-right: 2px; }
.big .tt.on { height: 21px; }
.big .tt:nth-child(3) { padding-right: 3px; margin-right: 1px; }
.big .wi { margin-left: 5px; }
.big .tt.last { padding: 0 18px 0 9px; margin-right: auto; }
.big .titlebar > svg { margin: 0 0 5px 4px; }
.big .titlebar > svg:last-child { margin-left: 3px; }
.big .subtabs { height: 23px; flex: none; padding-left: 4px; gap: 2px; font-size: 12px; }
.big .subtabs button { height: 19px; padding: 0 18px 0 10px; }
.big .subtabs .on { height: 20px; padding: 0 19px 0 10px; }
.big .ibody { flex: 1; min-height: 0; }
.big .plist { width: 100px; }
.big .phead { height: 28px; padding-left: 5px; gap: 5px; }
.big ul { display: grid; grid-auto-rows: 1fr; height: 168px; }
.big li { position: relative; padding-left: 15px; border-bottom: 1px solid #e6e6e6; display: flex; align-items: center; }
.big li a { padding: 0 1px; line-height: 14px; }
.big .cur { background: #2e66d4; color: #fff; outline: 1px dotted #112; }
.big .sub::before { content: ""; position: absolute; left: 6px; border: 4px solid transparent; border-left-color: #111; border-right: 0; }
.big .split { width: 7px; padding-top: 110px; }
.big .split i, .big .split b { height: 20px; margin-bottom: 10px; }
.big .pane { padding: 11px 0 0 11px; }
.big h2 { font-size: 12px; line-height: 15px; gap: 5px; }
.big h2::after { margin-bottom: 2px; }
.groups { display: flex; gap: 5px; margin-top: 8px; align-items: flex-start; }
.big h3 { font-size: 12px; line-height: 15px; padding: 2px 12px 0; }
.pos { flex: none; width: 254px; height: 68px; }
.xy { display: grid; grid-template-columns: 55px 58px 35px 58px; gap: 5px 6px; padding-top: 8px; }
.xy label { text-align: right; display: flex; align-items: center; justify-content: flex-end; padding-right: 2px; }
.spin { display: flex; width: 58px; height: 16px; background: #fff; border: 1px solid #8f8f8f; }
.spin input { flex: 1; width: 0; padding-left: 3px; font-size: 11px; }
.spin button { width: 15px; flex-direction: column; justify-content: center; gap: 2px; background: #c4c4c4; border-left: 1px solid #999; }
.spin button::before { content: ""; border: 4px solid transparent; border-bottom: 5px solid #111; border-top: 0; }
.spin button::after { content: ""; border: 4px solid transparent; border-top: 5px solid #111; border-bottom: 0; }
.spin.off { background: #ddd; color: #555; }
.spin.off button { background: #ddd; }
.spin.off button::before { border-bottom-color: #888; }
.spin.off button::after { border-top-color: #888; }
.opts { flex: 1; min-width: 0; height: 190px; }
.rows { display: grid; grid-template-columns: 197px 1fr; column-gap: 8px; grid-auto-rows: 21px; align-items: center; padding-top: 10px; }
.rows label { text-align: right; }
.rows .spin { width: 37px; }
.rows input[type=checkbox] { appearance: none; width: 13px; height: 13px; border: 1px solid #888; background: linear-gradient(#d8d8d8, #fff); border-radius: 1px; display: flex; justify-content: center; }
.rows input[type=checkbox]:checked { border-color: #33698f; background: linear-gradient(#fff, #c8ecff 40%, #38baf0); }
.rows input[type=checkbox]:checked::after { content: ""; width: 5px; height: 8px; border: solid #123a86; border-width: 0 2px 2px 0; transform: rotate(42deg); }

/* overlays */
.callout { position: absolute; width: 68px; height: 68px; }
.callout span { position: absolute; width: 16px; text-align: center; color: #fff; font: bold 11px/16px "Liberation Sans", sans-serif; }
.c2 { right: 39px; top: 146px; }
.c2 span, .c5 span { left: 5px; top: 8px; }
.c4 { left: 268px; top: 293px; }
.c4 span { left: 45px; top: 46px; }
.c5 { left: 395px; top: 167px; }
.cursor { position: absolute; left: 98px; top: 103px; }

/* reader side rail */
.rail { width: 61px; display: flex; flex-direction: column; align-items: center; padding: 11px 0 0 2px; background: #fff; }
.rail hr { width: 40px; height: 1px; background: #dcdcdc; margin-bottom: 5px; }
.rail .thick { height: 2px; margin: 5px 0 278px; }
.rail .narrow { width: 20px; margin: 6px 0; }
.rail button { width: 40px; height: 50px; flex: none; justify-content: center; }
.page, .total { font: 16px/24px "Open Sans", sans-serif; text-align: center; color: #3c3c3c; }
.page { width: 40px; height: 40px; flex: none; border: 1px solid #c8c8c8; border-radius: 4px; background: #fafafa; }
.total { margin: 18px 0 2px; }
```
